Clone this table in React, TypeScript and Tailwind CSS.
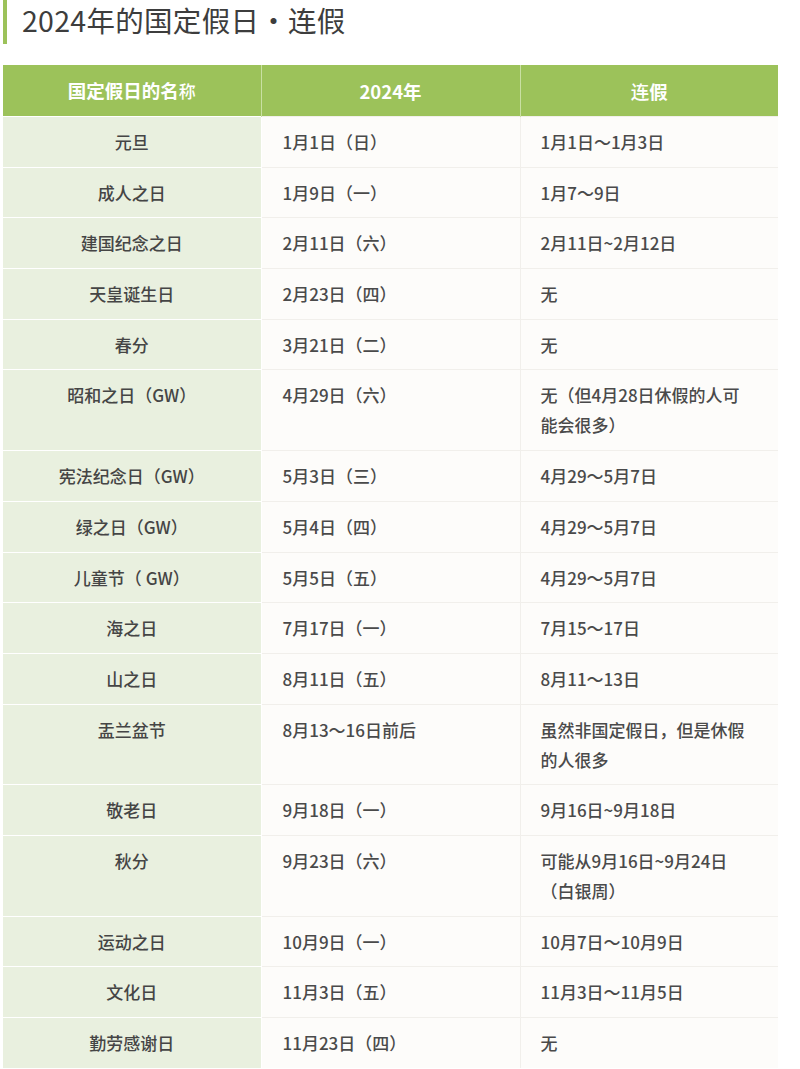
import React from 'react';

interface Holiday {
  name: string;
  date: string;
  rest: string;
}

const holidays: Holiday[] = [
  { name: '元旦', date: '1月1日（日）', rest: '1月1日～1月3日' },
  { name: '成人之日', date: '1月9日（一）', rest: '1月7～9日' },
  { name: '建国纪念之日', date: '2月11日（六）', rest: '2月11日~2月12日' },
  { name: '天皇诞生日', date: '2月23日（四）', rest: '无' },
  { name: '春分', date: '3月21日（二）', rest: '无' },
  { name: '昭和之日（GW）', date: '4月29日（六）', rest: '无（但4月28日休假的人可能会很多）' },
  { name: '宪法纪念日（GW）', date: '5月3日（三）', rest: '4月29～5月7日' },
  { name: '绿之日（GW）', date: '5月4日（四）', rest: '4月29～5月7日' },
  { name: '儿童节（ GW）', date: '5月5日（五）', rest: '4月29～5月7日' },
  { name: '海之日', date: '7月17日（一）', rest: '7月15～17日' },
  { name: '山之日', date: '8月11日（五）', rest: '8月11～13日' },
  { name: '盂兰盆节', date: '8月13～16日前后', rest: '虽然非国定假日，但是休假的人很多' },
  { name: '敬老日', date: '9月18日（一）', rest: '9月16日~9月18日' },
  { name: '秋分', date: '9月23日（六）', rest: '可能从9月16日~9月24日（白银周）' },
  { name: '运动之日', date: '10月9日（一）', rest: '10月7日～10月9日' },
  { name: '文化日', date: '11月3日（五）', rest: '11月3日～11月5日' },
  { name: '勤劳感谢日', date: '11月23日（四）', rest: '无' },
];

const font = { fontFamily: '"Noto Sans CJK SC", "Noto Sans", sans-serif' };

export default function App() {
  return (
    <div className="w-[800px] min-h-[1069px] bg-white" style={font}>
      {/* heading */}
      <div className="ml-[3px] w-[775px] h-[44px] border-l-4 border-[#9cc25a] pl-[15px] flex items-center">
        <h1 className="text-[28.5px] leading-[40px] text-[#3d3d3d] -mt-[4px] tracking-[0.3px]">
          2024年的国定假日・连假
        </h1>
      </div>

      <table className="mt-[21px] ml-[3px] w-[775px] border-collapse table-fixed text-[17px] leading-[30px] font-medium">
        <colgroup>
          <col className="w-[258px]" />
          <col className="w-[259px]" />
          <col className="w-[258px]" />
        </colgroup>
        <thead>
          <tr className="bg-[#9cc25a] text-white h-[51px] text-[18.5px]">
            <th className="font-bold border-r border-[#c9e0a2] py-[10px]">
              国定假日的名<span className="font-medium text-[17px]">称</span>
            </th>
            <th className="font-bold border-r border-[#c9e0a2] py-[10px]">2024年</th>
            <th className="font-bold py-[10px]">
              <span className="font-medium">连</span>假
            </th>
          </tr>
        </thead>
        <tbody>
          {holidays.map((h) => (
            <tr key={h.name} className="align-top">
              <td className="bg-[#e9f0df] text-[#454545] text-center pt-[10px] pb-[9.7px] border-t border-r border-white">
                {h.name}
              </td>
              <td className="bg-[#fdfcfa] text-[#4a4a4a] pl-[21px] pr-[16px] pt-[10px] pb-[9.7px] border-t border-r border-[#f1efeb]">
                {h.date}
              </td>
              <td className="bg-[#fdfcfa] text-[#4a4a4a] pl-[20px] pr-[24px] pt-[10px] pb-[9.7px] border-t border-[#f1efeb]">
                {h.rest}
              </td>
            </tr>
          ))}
        </tbody>
      </table>
    </div>
  );
}
